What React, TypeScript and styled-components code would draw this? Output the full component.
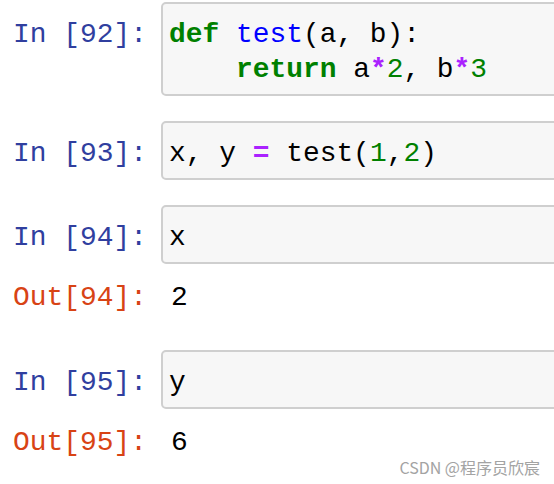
import React from "react";
import styled, { createGlobalStyle } from "styled-components";

const Global = createGlobalStyle`
  html, body {
    margin: 0;
    padding: 0;
    background: #ffffff;
    overflow: hidden;
  }
  #root {
    width: 554px;
    height: 484px;
    overflow: hidden;
    position: relative;
  }
`;

const Notebook = styled.div`
  width: 640px;
  padding-top: 2px;
  display: flex;
  flex-direction: column;
  gap: 25px;
  font-family: "Liberation Mono", "Courier New", monospace;
  font-size: 27.9px;
`;

const Cell = styled.div`
  display: flex;
  flex-direction: column;
`;

const Row = styled.div`
  display: flex;
  align-items: flex-start;
`;

const Prompt = styled.div<{ $out?: boolean }>`
  flex: 0 0 161px;
  box-sizing: border-box;
  padding-left: 13px;
  padding-top: ${(p) => (p.$out ? "16px" : "15px")};
  line-height: 35px;
  color: ${(p) => (p.$out ? "#d84315" : "#303f9f")};
  white-space: pre;
`;

const InputBox = styled.div`
  flex: 1;
  box-sizing: border-box;
  border: 2px solid #cfcfcf;
  border-radius: 5px;
  background: #f7f7f7;
  padding: 13px 6px 7px;
  line-height: 35px;
  color: #000;
  white-space: pre;
`;

const Output = styled.div`
  padding: 16px 0 10px 10px;
  line-height: 35px;
  color: #000;
  white-space: pre;
`;

const Kw = styled.span`
  color: #008000;
  font-weight: bold;
`;
const Fn = styled.span`
  color: #0000ff;
`;
const Op = styled.span`
  color: #aa22ff;
  font-weight: bold;
`;
const Num = styled.span`
  color: #008000;
`;

const Watermark = styled.div`
  position: absolute;
  right: 14px;
  top: 456px;
  font-family: "Noto Sans CJK SC", "Noto Sans", sans-serif;
  font-size: 16px;
  line-height: 22px;
  color: #a3a3a3;
  white-space: pre;
`;

export default function App() {
  return (
    <>
      <Global />
      <Notebook>
        <Cell>
          <Row>
            <Prompt>In [92]:</Prompt>
            <InputBox>
              <Kw>def</Kw> <Fn>test</Fn>(a, b):{"\n"}    <Kw>return</Kw> a<Op>*</Op>
              <Num>2</Num>, b<Op>*</Op>
              <Num>3</Num>
            </InputBox>
          </Row>
        </Cell>
        <Cell>
          <Row>
            <Prompt>In [93]:</Prompt>
            <InputBox>
              x, y <Op>=</Op> test(<Num>1</Num>,<Num>2</Num>)
            </InputBox>
          </Row>
        </Cell>
        <Cell>
          <Row>
            <Prompt>In [94]:</Prompt>
            <InputBox>x</InputBox>
          </Row>
          <Row>
            <Prompt $out>Out[94]:</Prompt>
            <Output>2</Output>
          </Row>
        </Cell>
        <Cell>
          <Row>
            <Prompt>In [95]:</Prompt>
            <InputBox>y</InputBox>
          </Row>
          <Row>
            <Prompt $out>Out[95]:</Prompt>
            <Output>6</Output>
          </Row>
        </Cell>
      </Notebook>
      <Watermark>CSDN @程序员欣宸</Watermark>
    </>
  );
}
